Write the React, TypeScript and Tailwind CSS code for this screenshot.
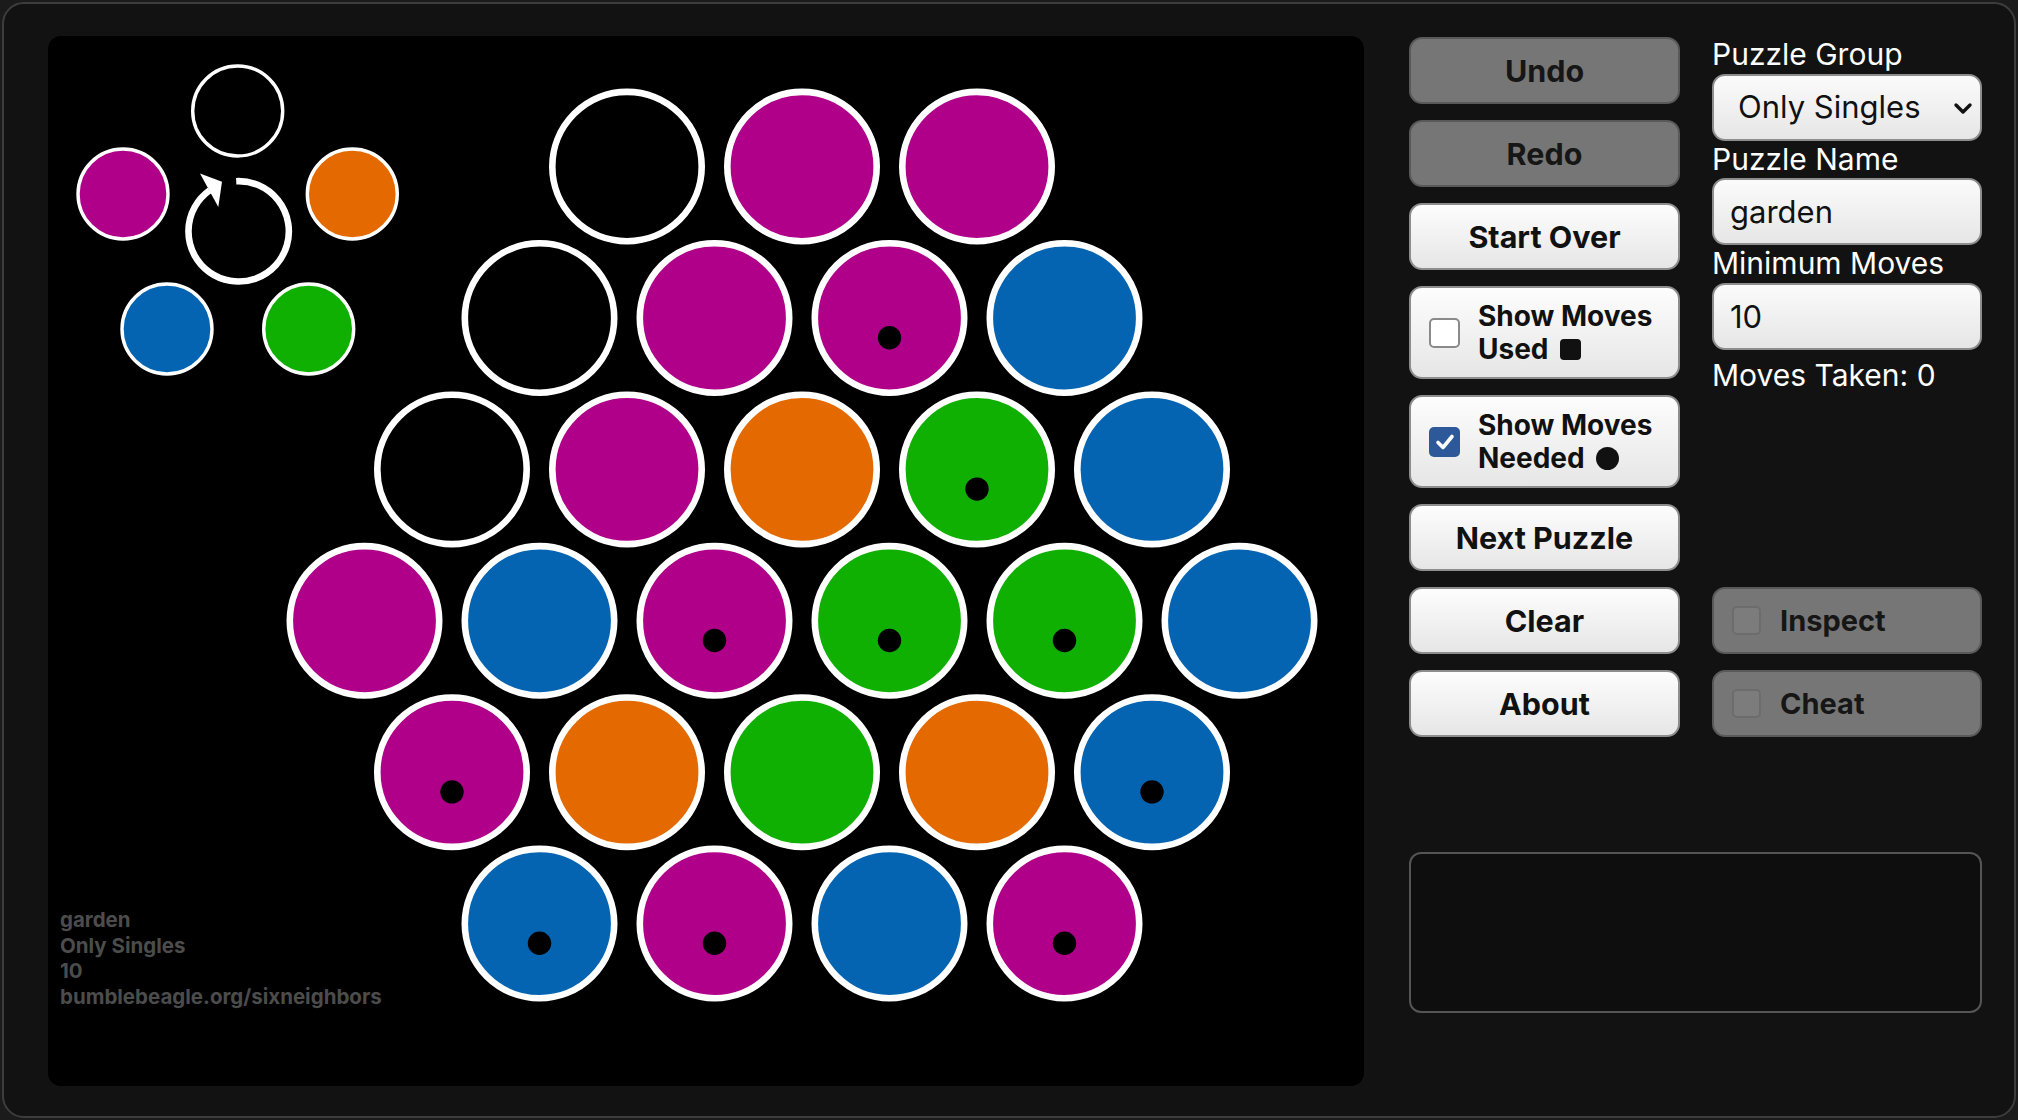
import React from "react";

const C: Record<string, string> = {
  k: "#000000",
  m: "#b0008a",
  o: "#e46a00",
  b: "#0464b1",
  g: "#10b002",
};

// each row: [startN, cells]; cell = color + optional '*' for dot
const rows: { start: number; cells: string[] }[] = [
  { start: -3, cells: ["k", "m", "m"] },
  { start: -4, cells: ["k", "m", "m*", "b"] },
  { start: -5, cells: ["k", "m", "o", "g*", "b"] },
  { start: -6, cells: ["m", "b", "m*", "g*", "g*", "b"] },
  { start: -5, cells: ["m*", "o", "g", "o", "b*"] },
  { start: -4, cells: ["b*", "m*", "b", "m*"] },
];

function Board() {
  const items: React.ReactNode[] = [];
  rows.forEach((row, r) => {
    row.cells.forEach((cell, i) => {
      const n = row.start + i * 2;
      const cx = 889.5 + 87.5 * n;
      const cy = 166.6 + 151.4 * r;
      const col = C[cell[0]];
      items.push(
        <g key={`${r}-${i}`}>
          <circle cx={cx} cy={cy} r={74.7} fill={col} stroke="#ffffff" strokeWidth={6.6} />
          {cell.includes("*") && <circle cx={cx} cy={cy + 19.7} r={11.7} fill="#000" />}
        </g>
      );
    });
  });
  return (
    <svg
      className="absolute inset-0"
      width={1316}
      height={1050}
      viewBox="48 36 1316 1050"
    >
      {/* legend */}
      <circle cx={237.7} cy={111} r={45} fill="#000" stroke="#fff" strokeWidth={3.4} />
      <circle cx={123} cy={194} r={45} fill={C.m} stroke="#fff" strokeWidth={3.4} />
      <circle cx={352.3} cy={194} r={45} fill={C.o} stroke="#fff" strokeWidth={3.4} />
      <circle cx={167} cy={329} r={45} fill={C.b} stroke="#fff" strokeWidth={3.4} />
      <circle cx={308.7} cy={329} r={45} fill={C.g} stroke="#fff" strokeWidth={3.4} />
      <path
        d="M 236.2 181.2 A 50.2 50.2 0 1 1 209.6 190.4"
        fill="none"
        stroke="#fff"
        strokeWidth={6.6}
      />
      <polygon points="200,173.5 222,181.7 218.3,207" fill="#fff" />
      {items}
    </svg>
  );
}

function Btn({ label, disabled }: { label: string; disabled?: boolean }) {
  return (
    <div
      className={
        disabled
          ? "h-[67px] w-[271px] rounded-[13px] border-2 border-[#595959] bg-[#767676] flex items-center justify-center text-[30.5px] font-bold text-[#161616]"
          : "h-[67px] w-[271px] rounded-[13px] border-2 border-[#8d8d8d] bg-linear-to-b from-[#fdfdfd] to-[#e6e6e6] flex items-center justify-center text-[30.5px] font-bold text-[#111]"
      }
    >
      {label}
    </div>
  );
}

function CheckBtn({
  line1,
  line2,
  checked,
  glyph,
}: {
  line1: string;
  line2: string;
  checked?: boolean;
  glyph: "square" | "circle";
}) {
  return (
    <div className="h-[93px] w-[271px] rounded-[13px] border-2 border-[#8d8d8d] bg-linear-to-b from-[#fdfdfd] to-[#e6e6e6] flex items-center pl-[18px]">
      {checked ? (
        <span className="w-[31px] h-[30px] rounded-[5px] bg-[#2d5899] flex items-center justify-center shrink-0">
          <svg width="20" height="18" viewBox="0 0 20 18">
            <path d="M3 9.5 L8 14.5 L17 3.5" fill="none" stroke="#fff" strokeWidth="3.6" strokeLinecap="round" strokeLinejoin="round" />
          </svg>
        </span>
      ) : (
        <span className="w-[31px] h-[30px] rounded-[5px] border-2 border-[#8a8a8a] bg-white shrink-0" />
      )}
      <div className="ml-[18px] text-[28px] leading-[33px] font-bold text-[#111] text-left">
        <div>{line1}</div>
        <div className="flex items-center">
          {line2}
          {glyph === "square" ? (
            <span className="inline-block ml-[11px] w-[21px] h-[21px] rounded-[4px] bg-[#111]" />
          ) : (
            <span className="inline-block ml-[11px] w-[23px] h-[23px] rounded-full bg-[#111]" />
          )}
        </div>
      </div>
    </div>
  );
}

function DisabledCheck({ label }: { label: string }) {
  return (
    <div className="h-[67px] w-[270px] rounded-[13px] border-2 border-[#595959] bg-[#767676] flex items-center pl-[18px]">
      <span className="w-[29px] h-[29px] rounded-[5px] border-2 border-[#6c6c6c] bg-[#7c7c7c] shrink-0" />
      <span className="ml-[19px] text-[29px] font-bold text-[#161616]">{label}</span>
    </div>
  );
}

const inputCls =
  "h-[67px] w-[270px] rounded-[13px] border-2 border-[#8d8d8d] bg-linear-to-b from-[#fbfbfb] to-[#e6e6e6] text-[31px] text-[#111] outline-none";

export default function App() {
  return (
    <div className="w-[2018px] h-[1120px] bg-[#1b1b1b] p-[2px] font-['Inter',sans-serif]">
      <div className="h-full rounded-[22px] border-2 border-[#3d3d3d] bg-[#121212] flex pl-[44px] pt-[32px]">
        <div className="relative w-[1316px] h-[1050px] shrink-0 rounded-[13px] bg-black overflow-hidden">
          <Board />
          <div className="absolute left-[12px] top-[871px] text-[20.5px] leading-[25.6px] font-bold text-[#4c4c4c]">
            <div>garden</div>
            <div>Only Singles</div>
            <div>10</div>
            <div>bumblebeagle.org/sixneighbors</div>
          </div>
        </div>

        <div className="ml-[45px] w-[574px] flex flex-col pt-[1px]">
          <div className="flex gap-[32px]">
            <div className="flex flex-col gap-[16px]">
              <Btn label="Undo" disabled />
              <Btn label="Redo" disabled />
              <Btn label="Start Over" />
              <CheckBtn line1="Show Moves" line2="Used" glyph="square" />
              <CheckBtn line1="Show Moves" line2="Needed" glyph="circle" checked />
              <Btn label="Next Puzzle" />
            </div>
            <div className="flex flex-col w-[270px] -mt-[1px] text-white">
              <div className="text-[30px] leading-[37.5px]">Puzzle Group</div>
              <div className="relative">
                <select className={inputCls + " appearance-none pl-[24px]"} defaultValue="Only Singles">
                  <option>Only Singles</option>
                </select>
                <svg
                  className="absolute right-[9px] top-[28px] pointer-events-none"
                  width="20"
                  height="13"
                  viewBox="0 0 20 13"
                >
                  <path d="M3 3 L10 10 L17 3" fill="none" stroke="#111" strokeWidth="3.4" strokeLinecap="round" strokeLinejoin="round" />
                </svg>
              </div>
              <div className="text-[30px] leading-[37.5px]">Puzzle Name</div>
              <input className={inputCls + " pl-[16px]"} readOnly value="garden" />
              <div className="text-[30px] leading-[37.5px]">Minimum Moves</div>
              <input className={inputCls + " pl-[16px]"} readOnly value="10" />
              <div className="mt-[7px] text-[30px] leading-[37.5px]">Moves Taken: 0</div>
            </div>
          </div>
          <div className="mt-[16px] flex gap-[32px]">
            <Btn label="Clear" />
            <DisabledCheck label="Inspect" />
          </div>
          <div className="mt-[16px] flex gap-[32px]">
            <Btn label="About" />
            <DisabledCheck label="Cheat" />
          </div>
          <div className="mt-[115px] h-[161px] w-[573px] rounded-[12px] border-2 border-[#555555] bg-[#0e0e0e]" />
        </div>
      </div>
    </div>
  );
}
